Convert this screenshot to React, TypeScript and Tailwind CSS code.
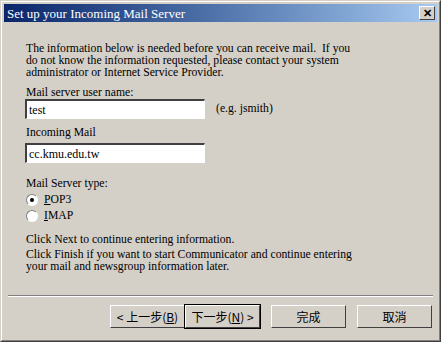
import { type ReactNode } from 'react'

const FONT = { fontFamily: '"Liberation Serif", "Noto Sans CJK TC", serif' }

function Field({ value }: { value: string }) {
  return (
    <div className="w-[180px] h-[20px] bg-white border-t-2 border-l-2 border-t-[#404040] border-l-[#404040] border-b border-r border-b-white border-r-white flex items-center px-[2px] text-[12px] text-black">
      {value}
    </div>
  )
}

function Radio({ checked, children }: { checked?: boolean; children: ReactNode }) {
  return (
    <div className="flex items-center gap-[6px] h-[16px]">
      <div className="w-[12px] h-[12px] rounded-full bg-white border border-t-[#808080] border-l-[#808080] border-b-white border-r-white grid place-items-center">
        {checked && <div className="w-[4px] h-[4px] rounded-full bg-black" />}
      </div>
      <span>{children}</span>
    </div>
  )
}

function Btn({ children, focus }: { children: ReactNode; focus?: boolean }) {
  return (
    <div className={`w-[75px] h-[23px] bg-[#d4d0c8] border border-t-white border-l-white border-b-[#404040] border-r-[#404040] flex items-center justify-center text-[12px] ${focus ? 'outline outline-1 outline-black' : ''}`}>
      {children}
    </div>
  )
}

export default function App() {
  return (
    <div className="w-[441px] h-[342px] bg-[#d4d0c8] border border-t-[#d4d0c8] border-l-[#d4d0c8] border-b-[#404040] border-r-[#404040] flex flex-col overflow-hidden" style={FONT}>
      <div className="flex-1 flex flex-col border border-t-white border-l-white border-b-[#808080] border-r-[#808080] p-[2px]">
        {/* title bar */}
        <div className="h-[18px] flex items-center justify-between pl-[3px] pr-[2px] bg-gradient-to-r from-[#0a246a] to-[#a6caf0]">
          <span className="text-white text-[13px] leading-none">Set up your Incoming Mail Server</span>
          <div className="w-[16px] h-[14px] bg-[#d4d0c8] border border-t-white border-l-white border-b-[#404040] border-r-[#404040] grid place-items-center text-[11px] font-bold leading-none">✕</div>
        </div>

        <div className="flex-1 flex flex-col text-black text-[11.7px] leading-[12px]">
          <div className="pl-[22px] pt-[21px]">
            <p className="leading-[12px]">
              The information below is needed before you can receive mail.&nbsp; If you<br />
              do not know the information requested, please contact your system<br />
              administrator or Internet Service Provider.
            </p>

            <div className="mt-[8px]">Mail server user name:</div>
            <div className="flex items-center gap-[11px] -ml-[1px]">
              <Field value="test" />
              <span>(e.g. jsmith)</span>
            </div>

            <div className="mt-[8px]">Incoming Mail</div>
            <div className="mt-[4px] -ml-[1px]">
              <Field value="cc.kmu.edu.tw" />
            </div>

            <div className="mt-[15px]">Mail Server type:</div>
            <div className="mt-[2px] flex flex-col">
              <Radio checked><span className="underline">P</span>OP3</Radio>
              <Radio><span className="underline">I</span>MAP</Radio>
            </div>

            <div className="mt-[10px]">Click Next to continue entering information.</div>
            <div className="mt-[3px]">
              Click Finish if you want to start Communicator and continue entering<br />
              your mail and newsgroup information later.
            </div>
          </div>

          <div className="mt-auto mx-[4px] border-t border-t-[#808080] border-b border-b-white" />
          <div className="flex justify-end items-center gap-[11px] pr-[5px] pt-[8px] pb-[10px]" style={{ fontFamily: '"Noto Sans CJK TC", sans-serif' }}>
            <div className="flex">
              <Btn>&lt; 上一步(<span className="underline">B</span>)</Btn>
              <Btn focus>下一步(<span className="underline">N</span>) &gt;</Btn>
            </div>
            <Btn>完成</Btn>
            <Btn>取消</Btn>
          </div>
        </div>
      </div>
    </div>
  )
}
